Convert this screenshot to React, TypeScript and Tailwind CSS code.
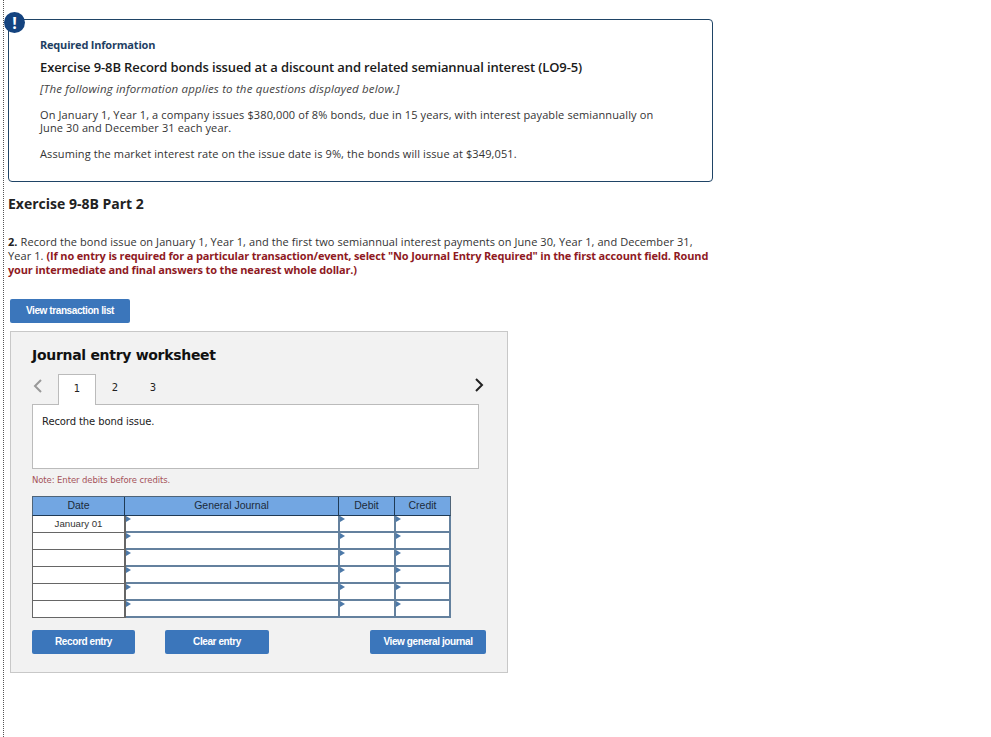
import React from "react";

function Btn({ className = "", children }: { className?: string; children: React.ReactNode }) {
  return (
    <div className={`h-[24px] shrink-0 bg-[#3b76bb] rounded-[2px] flex items-center justify-center text-white text-[10px] font-bold font-['Liberation_Sans',sans-serif] tracking-[-0.4px] pb-[1px] ${className}`}>
      {children}
    </div>
  );
}

function Cell({ className = "" }: { className?: string }) {
  return (
    <div className={`relative bg-white border-2 border-t-0 border-l-0 border-[#64819e] ${className}`}>
      <svg className="absolute left-0 top-0" width="5" height="6" viewBox="0 0 5 6"><path d="M0 0 L5 3 L0 6 Z" fill="#4d79a8" /></svg>
    </div>
  );
}

export default function App() {
  const rows = ["January 01", "", "", "", "", ""];
  return (
    <div className="min-h-[737px] w-[991px] bg-white overflow-hidden font-['Open_Sans',sans-serif]">
      <div className="ml-[3px] min-h-[737px] border-l border-dotted border-[#555] pl-[4px] pt-[19px]">
        <div className="relative w-[705px] h-[163px] border border-[#1f4466] rounded-[4px] pl-[31px] pt-[18px]">
          <div className="absolute left-[-5px] top-[-8px] w-[21px] h-[21px] rounded-full bg-[#14437f] flex items-center justify-center text-white font-bold text-[16px]">!</div>
          <div className="text-[11px] leading-[14px] font-bold text-[#1f3f64] tracking-[-0.2px]">Required Information</div>
          <div className="mt-[7px] text-[13px] leading-[16px] font-semibold text-[#1a1a1a] tracking-[-0.12px]">Exercise 9-8B Record bonds issued at a discount and related semiannual interest (LO9-5)</div>
          <div className="mt-[7px] text-[11.5px] leading-[14px] italic text-[#444] tracking-[0.17px]">[The following information applies to the questions displayed below.]</div>
          <div className="mt-[12px] text-[11px] leading-[13px] text-[#333] w-[620px] tracking-[0.12px]">On January 1, Year 1, a company issues $380,000 of 8% bonds, due in 15 years, with interest payable semiannually on June 30 and December 31 each year.</div>
          <div className="mt-[13px] text-[11px] leading-[13px] text-[#333] tracking-[0.11px]">Assuming the market interest rate on the issue date is 9%, the bonds will issue at $349,051.</div>
        </div>
        <div className="mt-[13px] text-[14px] leading-[18px] font-bold text-[#222]">Exercise 9-8B Part 2</div>
        <div className="mt-[22px] w-[703px] text-[11px] leading-[14px] text-[#333] tracking-[0.08px]">
          <b className="text-[#222]">2.</b> Record the bond issue on January 1, Year 1, and the first two semiannual interest payments on June 30, Year 1, and December 31, Year 1. <b className="text-[#8f1a1f] tracking-[-0.16px]">(If no entry is required for a particular transaction/event, select "No Journal Entry Required" in the first account field. Round your intermediate and final answers to the nearest whole dollar.)</b>
        </div>
        <Btn className="mt-[22px] ml-[2px] w-[120px]">View transaction list</Btn>
        <div className="mt-[8px] ml-[2px] w-[498px] h-[342px] bg-[#f2f2f2] border border-[#c8c8c8] pl-[21px] pr-[28px]">
          <div className="pt-[13px] text-[14px] leading-[20px] font-bold text-[#111] font-['DejaVu_Sans',sans-serif] tracking-[-0.3px]">Journal entry worksheet</div>
          <div className="mt-[9px] flex items-start h-[31px] relative font-['DejaVu_Sans',sans-serif] text-[10px] text-[#222]">
            <svg className="mt-[5px] ml-[1px] mr-[15px]" width="10" height="14" viewBox="0 0 10 14"><path d="M8 1 L2 7 L8 13" fill="none" stroke="#999" strokeWidth="2" /></svg>
            <div className="relative z-10 w-[38px] h-[31px] pb-[3px] bg-white border border-b-0 border-[#bbb] flex items-center justify-center font-medium">1</div>
            <div className="w-[38px] h-[31px] pb-[4px] flex items-center justify-center">2</div>
            <div className="w-[38px] h-[31px] pb-[4px] flex items-center justify-center">3</div>
            <svg className="absolute right-[-5px] top-[4px]" width="10" height="14" viewBox="0 0 10 14"><path d="M2 1 L8 7 L2 13" fill="none" stroke="#222" strokeWidth="2" /></svg>
          </div>
          <div className="-mt-px w-[447px] h-[65px] bg-white border border-[#bbb] pl-[9px] pt-[10px] text-[10px] leading-[14px] text-[#222] font-['DejaVu_Sans',sans-serif] tracking-[-0.1px]">Record the bond issue.</div>
          <div className="mt-[5px] text-[8.5px] leading-[12px] text-[#a5525a] font-['DejaVu_Sans',sans-serif] tracking-[-0.1px]">Note: Enter debits before credits.</div>
          <div className="mt-[10px] w-[419px] font-['Liberation_Sans',sans-serif] text-[10.5px] text-[#1c2b3a]">
            <div className="flex h-[20px] bg-[#72a6e2] border border-[#4f6478] border-b-[#1f3a55] text-center leading-[17px]">
              <div className="w-[92px] border-r border-[#1f3a55]">Date</div>
              <div className="w-[214px] border-r border-[#1f3a55]">General Journal</div>
              <div className="w-[56px] border-r border-[#1f3a55]">Debit</div>
              <div className="flex-1">Credit</div>
            </div>
            {rows.map((r, i) => (
              <div key={i} className="flex h-[17px] border-l border-[#666]">
                <div className="w-[93px] bg-white border-r-2 border-b border-[#666] text-center leading-[15px] text-[9.7px] text-[#333]">{r}</div>
                <Cell className="w-[214px]" />
                <Cell className="w-[56px]" />
                <Cell className="w-[55px]" />
              </div>
            ))}
          </div>
          <div className="mt-[12px] flex">
            <Btn className="w-[103px]">Record entry</Btn>
            <Btn className="w-[104px] ml-[30px]">Clear entry</Btn>
            <Btn className="w-[116px] ml-[101px]">View general journal</Btn>
          </div>
        </div>
      </div>
    </div>
  );
}
